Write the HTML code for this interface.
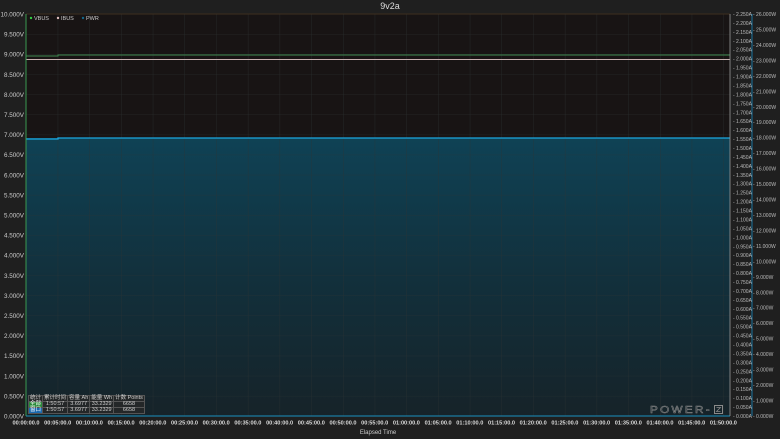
<!DOCTYPE html><html><head><meta charset="utf-8"><style>
body{margin:0;width:780px;height:439px;background:#1f1f1f;overflow:hidden;font-family:"Liberation Sans","Noto Sans CJK SC",sans-serif}
svg{position:absolute;left:0;top:0}
text{font-family:"Liberation Sans","Noto Sans CJK SC",sans-serif}
.tb{position:absolute;left:28px;top:395px;border-collapse:collapse;font-size:5.5px;color:#ccc;background:rgba(40,40,40,.8)}
.tb td{border:1px solid #555;padding:0 1px;height:5px;line-height:5px;text-align:center;white-space:nowrap}
</style></head><body>
<svg width="780" height="439" xmlns="http://www.w3.org/2000/svg">
<defs>
<linearGradient id="g" x1="0" y1="0" x2="0" y2="1"><stop offset="0" stop-color="#0f4255"/><stop offset="0.5" stop-color="#12303c"/><stop offset="1" stop-color="#162329"/></linearGradient>
<pattern id="hg" width="31.7" height="20.1" patternUnits="userSpaceOnUse" x="26" y="14"><path d="M0 0H31.7M0 0V20.1" stroke="#2e3333" stroke-width="0.6" fill="none"/></pattern>
</defs>
<text x="390" y="9" fill="#ddd" font-size="9" text-anchor="middle">9v2a</text>
<rect x="26" y="14" width="704" height="402" fill="#181414"/>
<rect x="26" y="138" width="704" height="278" fill="url(#g)"/>
<rect x="26" y="14" width="704" height="402" fill="url(#hg)"/>
<line x1="26" y1="14" x2="730" y2="14" stroke="#5a3a1a" stroke-width="0.6"/>
<path d="M26 56H58V55H730" stroke="#3f8a50" stroke-width="1" fill="none"/>
<line x1="26" y1="59.5" x2="730" y2="59.5" stroke="#c8b0b0" stroke-width="0.9"/>
<path d="M26 139H58V138H730" stroke="#1aa8e0" stroke-width="1.3" fill="none"/>
<line x1="26" y1="14" x2="26" y2="416" stroke="#3a9a50" stroke-width="1"/>
<line x1="26" y1="416" x2="730" y2="416" stroke="#1a90c0" stroke-width="1"/>
<line x1="730" y1="14" x2="730" y2="416" stroke="#999" stroke-width="0.8"/>
<line x1="752" y1="14" x2="752" y2="416" stroke="#1a8ac0" stroke-width="0.8"/>
<circle cx="31" cy="18" r="1.2" fill="#3c4"/><text x="34" y="20" fill="#ccc" font-size="5.5">VBUS</text>
<circle cx="58" cy="18" r="1.2" fill="#dbb"/><text x="61" y="20" fill="#ccc" font-size="5.5">IBUS</text>
<circle cx="83" cy="18" r="1.2" fill="#168"/><text x="86" y="20" fill="#ccc" font-size="5.5">PWR</text>
<g fill="#ccc" font-size="6.3" text-anchor="end">
<text x="24" y="16.5">10.000V</text><text x="24" y="36.6">9.500V</text><text x="24" y="56.7">9.000V</text><text x="24" y="76.8">8.500V</text><text x="24" y="96.9">8.000V</text><text x="24" y="117">7.500V</text><text x="24" y="137.1">7.000V</text><text x="24" y="157.2">6.500V</text><text x="24" y="177.3">6.000V</text><text x="24" y="197.4">5.500V</text><text x="24" y="217.5">5.000V</text><text x="24" y="237.6">4.500V</text><text x="24" y="257.7">4.000V</text><text x="24" y="277.8">3.500V</text><text x="24" y="297.9">3.000V</text><text x="24" y="318">2.500V</text><text x="24" y="338.1">2.000V</text><text x="24" y="358.2">1.500V</text><text x="24" y="378.3">1.000V</text><text x="24" y="398.4">0.500V</text><text x="24" y="418.5">0.000V</text>
</g>
<g fill="#bbb" font-size="5">
<text x="733" y="16">- 2.250A</text><text x="733" y="24.9">- 2.200A</text><text x="733" y="33.9">- 2.150A</text><text x="733" y="42.8">- 2.100A</text><text x="733" y="51.7">- 2.050A</text><text x="733" y="60.7">- 2.000A</text><text x="733" y="69.6">- 1.950A</text><text x="733" y="78.5">- 1.900A</text><text x="733" y="87.5">- 1.850A</text><text x="733" y="96.4">- 1.800A</text><text x="733" y="105.3">- 1.750A</text><text x="733" y="114.3">- 1.700A</text><text x="733" y="123.2">- 1.650A</text><text x="733" y="132.1">- 1.600A</text><text x="733" y="141.1">- 1.550A</text><text x="733" y="150">- 1.500A</text><text x="733" y="158.9">- 1.450A</text><text x="733" y="167.9">- 1.400A</text><text x="733" y="176.8">- 1.350A</text><text x="733" y="185.7">- 1.300A</text><text x="733" y="194.7">- 1.250A</text><text x="733" y="203.6">- 1.200A</text><text x="733" y="212.5">- 1.150A</text><text x="733" y="221.5">- 1.100A</text><text x="733" y="230.4">- 1.050A</text><text x="733" y="239.3">- 1.000A</text><text x="733" y="248.3">- 0.950A</text><text x="733" y="257.2">- 0.900A</text><text x="733" y="266.1">- 0.850A</text><text x="733" y="275.1">- 0.800A</text><text x="733" y="284">- 0.750A</text><text x="733" y="292.9">- 0.700A</text><text x="733" y="301.9">- 0.650A</text><text x="733" y="310.8">- 0.600A</text><text x="733" y="319.7">- 0.550A</text><text x="733" y="328.7">- 0.500A</text><text x="733" y="337.6">- 0.450A</text><text x="733" y="346.5">- 0.400A</text><text x="733" y="355.5">- 0.350A</text><text x="733" y="364.4">- 0.300A</text><text x="733" y="373.3">- 0.250A</text><text x="733" y="382.3">- 0.200A</text><text x="733" y="391.2">- 0.150A</text><text x="733" y="400.1">- 0.100A</text><text x="733" y="409.1">- 0.050A</text><text x="733" y="418">- 0.000A</text>
</g>
<g fill="#bbb" font-size="5">
<text x="753" y="16">- 26.000W</text><text x="753" y="31.5">- 25.000W</text><text x="753" y="46.9">- 24.000W</text><text x="753" y="62.4">- 23.000W</text><text x="753" y="77.8">- 22.000W</text><text x="753" y="93.3">- 21.000W</text><text x="753" y="108.8">- 20.000W</text><text x="753" y="124.2">- 19.000W</text><text x="753" y="139.7">- 18.000W</text><text x="753" y="155.1">- 17.000W</text><text x="753" y="170.6">- 16.000W</text><text x="753" y="186.1">- 15.000W</text><text x="753" y="201.5">- 14.000W</text><text x="753" y="217">- 13.000W</text><text x="753" y="232.4">- 12.000W</text><text x="753" y="247.9">- 11.000W</text><text x="753" y="263.4">- 10.000W</text><text x="753" y="278.8">- 9.000W</text><text x="753" y="294.3">- 8.000W</text><text x="753" y="309.7">- 7.000W</text><text x="753" y="325.2">- 6.000W</text><text x="753" y="340.7">- 5.000W</text><text x="753" y="356.1">- 4.000W</text><text x="753" y="371.6">- 3.000W</text><text x="753" y="387">- 2.000W</text><text x="753" y="402.5">- 1.000W</text><text x="753" y="418">- 0.000W</text>
</g>
<g fill="#ddd" font-size="5.6" text-anchor="middle" font-weight="bold">
<text x="26" y="424.5">00:00:00.0</text><text x="57.7" y="424.5">00:05:00.0</text><text x="89.4" y="424.5">00:10:00.0</text><text x="121.1" y="424.5">00:15:00.0</text><text x="152.8" y="424.5">00:20:00.0</text><text x="184.5" y="424.5">00:25:00.0</text><text x="216.2" y="424.5">00:30:00.0</text><text x="247.9" y="424.5">00:35:00.0</text><text x="279.6" y="424.5">00:40:00.0</text><text x="311.3" y="424.5">00:45:00.0</text><text x="343" y="424.5">00:50:00.0</text><text x="374.7" y="424.5">00:55:00.0</text><text x="406.4" y="424.5">01:00:00.0</text><text x="438.1" y="424.5">01:05:00.0</text><text x="469.8" y="424.5">01:10:00.0</text><text x="501.5" y="424.5">01:15:00.0</text><text x="533.2" y="424.5">01:20:00.0</text><text x="564.9" y="424.5">01:25:00.0</text><text x="596.6" y="424.5">01:30:00.0</text><text x="628.3" y="424.5">01:35:00.0</text><text x="660" y="424.5">01:40:00.0</text><text x="691.7" y="424.5">01:45:00.0</text><text x="723.4" y="424.5">01:50:00.0</text>
</g>
<text x="378" y="434" fill="#ccc" font-size="6" text-anchor="middle">Elapsed Time</text>
<text x="650" y="413" fill="none" stroke="#8a8a8a" stroke-width="0.5" font-size="10" letter-spacing="2" textLength="62" lengthAdjust="spacingAndGlyphs">POWER-</text>
<rect x="714.5" y="405.5" width="8" height="8" fill="none" stroke="#8a8a8a" stroke-width="1"/>
<path d="M716.5 407.5H720.5L716.5 411.5H720.5" stroke="#8a8a8a" stroke-width="0.8" fill="none"/>
</svg>
<table class="tb">
<tr><td>统计</td><td>累计时间</td><td>容量 Ah</td><td>能量 Wh</td><td>计数 Points</td></tr>
<tr><td style="background:#2a8a3a;color:#fff">全部</td><td>1:50:57</td><td>3.6977</td><td>33.2329</td><td>6658</td></tr>
<tr><td style="background:#1a6ab0;color:#fff">窗口</td><td>1:50:57</td><td>3.6977</td><td>33.2329</td><td>6658</td></tr>
</table>
</body></html>
